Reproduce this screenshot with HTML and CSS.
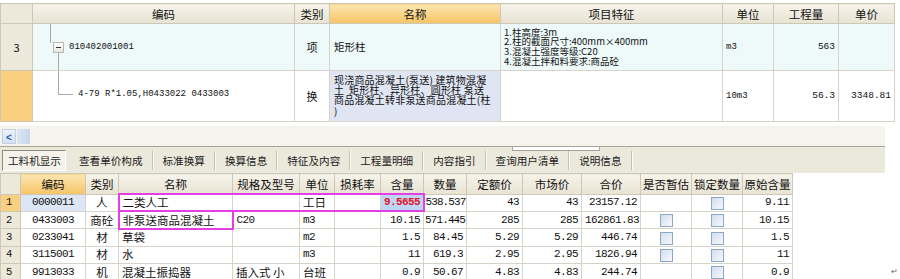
FILE: index.html
```html
<!DOCTYPE html>
<html lang="zh-CN">
<head>
  <meta charset="UTF-8">
  <title>清单组价</title>
  <link rel="stylesheet" href="styles.css">
</head>
<body>
  <div class="upper">
    <table class="grid top">
      <colgroup>
        <col style="width:32px"><col style="width:262px"><col style="width:35px"><col style="width:171px">
        <col style="width:222px"><col style="width:51px"><col style="width:65px"><col style="width:56px">
      </colgroup>
      <thead>
        <tr>
          <th class="rn"></th><th>编码</th><th>类别</th><th class="hot">名称</th>
          <th>项目特征</th><th>单位</th><th>工程量</th><th>单价</th>
        </tr>
      </thead>
      <tbody>
        <tr class="item">
          <td class="rn">3</td>
          <td class="code">
            <div class="node lvl1"><span class="tog"></span><span class="mono">010402001001</span></div>
          </td>
          <td class="c">项</td>
          <td class="name">矩形柱</td>
          <td class="feat">1.柱高度:3m<br>2.柱的截面尺寸:400mm×400mm<br>3.混凝土强度等级:C20<br>4.混凝土拌和料要求:商品砼</td>
          <td class="unit mono">m3</td>
          <td class="num">563</td>
          <td class="num"></td>
        </tr>
        <tr class="sub">
          <td class="rn cur"></td>
          <td class="code">
            <div class="node lvl2"><span class="elbow"></span><span class="mono">4-79 R*1.05,H0433022 0433003</span></div>
          </td>
          <td class="c">换</td>
          <td class="name long sel">现浇商品混凝土(泵送) 建筑物混凝<br>土&nbsp; 矩形柱、异形柱、圆形柱 泵送<br>商品混凝土转非泵送商品混凝土(柱<br>)</td>
          <td class="blank"></td>
          <td class="unit mono">10m3</td>
          <td class="num">56.3</td>
          <td class="num">3348.81</td>
        </tr>
      </tbody>
    </table>
    <div class="hscroll"><span class="arrow">&lt;</span><span class="thumb"></span></div>
  </div>

  <div class="tabs">
    <span class="tab on">工料机显示</span>
    <span class="tab">查看单价构成</span>
    <span class="tab">标准换算</span>
    <span class="tab">换算信息</span>
    <span class="tab">特征及内容</span>
    <span class="tab">工程量明细</span>
    <span class="tab">内容指引</span>
    <span class="tab">查询用户清单</span>
    <span class="tab">说明信息</span>
    <span class="grip"></span>
  </div>

  <table class="grid bottom">
    <colgroup>
      <col style="width:20px"><col style="width:65px"><col style="width:33px"><col style="width:114px">
      <col style="width:67px"><col style="width:35px"><col style="width:46px"><col style="width:43px">
      <col style="width:43px"><col style="width:56px"><col style="width:59px"><col style="width:59px">
      <col style="width:51px"><col style="width:51px"><col style="width:50px">
    </colgroup>
    <thead>
      <tr>
        <th class="rn"></th><th class="hot">编码</th><th>类别</th><th>名称</th><th>规格及型号</th>
        <th>单位</th><th>损耗率</th><th>含量</th><th>数量</th><th>定额价</th><th>市场价</th>
        <th>合价</th><th>是否暂估</th><th>锁定数量</th><th>原始含量</th>
      </tr>
    </thead>
    <tbody>
      <tr>
        <td class="rn cur">1</td><td class="c n sel">0000011</td><td class="c">人</td>
        <td class="mk-t mk-b mk-l">二类人工</td><td class="mk-t mk-b"></td><td class="mk-t mk-b">工日</td>
        <td class="mk-t mk-b"></td><td class="r n hl mk-t mk-b mk-r">9.5655</td>
        <td class="r n tight">538.537</td><td class="r n">43</td><td class="r n">43</td><td class="r n">23157.12</td>
        <td></td><td class="c"><span class="cb"></span></td><td class="r n">9.11</td>
      </tr>
      <tr>
        <td class="rn">2</td><td class="c n">0433003</td><td class="c">商砼</td>
        <td class="mk-t mk-b mk-l mk-r">非泵送商品混凝土</td><td class="n">C20</td><td class="n">m3</td>
        <td></td><td class="r n">10.15</td><td class="r n tight">571.445</td><td class="r n">285</td><td class="r n">285</td>
        <td class="r n">162861.83</td><td class="c"><span class="cb"></span></td><td class="c"><span class="cb"></span></td>
        <td class="r n">10.15</td>
      </tr>
      <tr>
        <td class="rn">3</td><td class="c n">0233041</td><td class="c">材</td>
        <td>草袋</td><td></td><td class="n">m2</td>
        <td></td><td class="r n">1.5</td><td class="r n">84.45</td><td class="r n">5.29</td><td class="r n">5.29</td>
        <td class="r n">446.74</td><td class="c"><span class="cb"></span></td><td class="c"><span class="cb"></span></td>
        <td class="r n">1.5</td>
      </tr>
      <tr>
        <td class="rn">4</td><td class="c n">3115001</td><td class="c">材</td>
        <td>水</td><td></td><td class="n">m3</td>
        <td></td><td class="r n">11</td><td class="r n">619.3</td><td class="r n">2.95</td><td class="r n">2.95</td>
        <td class="r n">1826.94</td><td class="c"><span class="cb"></span></td><td class="c"><span class="cb"></span></td>
        <td class="r n">11</td>
      </tr>
      <tr>
        <td class="rn">5</td><td class="c n">9913033</td><td class="c">机</td>
        <td>混凝土振捣器</td><td>插入式 小</td><td>台班</td>
        <td></td><td class="r n">0.9</td><td class="r n">50.67</td><td class="r n">4.83</td><td class="r n">4.83</td>
        <td class="r n">244.74</td><td></td><td class="c"><span class="cb"></span></td>
        <td class="r n">0.9</td>
      </tr>
    </tbody>
  </table>
  <span class="mark">↵</span>
</body>
</html>
```

FILE: styles.css
```css
body {
  margin: 0;
  background: #fff;
  font-family: "Noto Sans CJK SC", "Liberation Sans", sans-serif;
  font-size: 11px;
  color: #111;
  width: 900px;
  height: 279px;
  overflow: hidden;
  position: relative;
}

.mono {
  font-family: "Liberation Mono", "Noto Sans CJK SC", monospace;
  font-size: 9px;
}

/* shared grid look */
.grid {
  border-collapse: collapse;
  table-layout: fixed;
}

.grid th {
  height: 19px;
  padding: 0;
  font-weight: normal;
  font-size: 11.5px;
  background: linear-gradient(#f6f3ea, #e8e3d3);
  border: 1px solid #cdc8b6;
  text-align: center;
  white-space: nowrap;
}

.grid th.hot {
  background: linear-gradient(#fde6b2, #f5c466);
}

.grid td {
  padding: 0 3px;
  border: 1px solid #d6d3ca;
  white-space: nowrap;
  overflow: hidden;
}

.grid .rn {
  background: #ece8da;
  border-color: #cdc8b6;
}

.grid .rn.cur {
  background: #fbcf80;
}

.c { text-align: center; }
.r { text-align: right; }

/* upper grid */
.upper {
  padding-top: 3px;
}

.top {
  width: 895px;
}

.top td {
  height: 46px;
  line-height: 12px;
  background: #fff;
}

.top .item td {
  background: #eefafa;
}

.top .item td.rn {
  background: #ece8da;
  text-align: center;
}

.top td.sel {
  background: #dfe5f2;
}

.top td.c {
  font-size: 11px;
}

.top .name {
  padding-left: 4px;
  font-size: 10.5px;
}

.top .name.long {
  font-size: 10px;
  line-height: 10.2px;
  letter-spacing: 0.2px;
  vertical-align: top;
  padding-top: 4px;
}

.top .feat {
  font-size: 9.5px;
  line-height: 9.6px;
  padding-left: 3px;
}

.top .unit {
  padding-left: 3px;
}

.top .num {
  text-align: right;
  font-family: "Liberation Mono", monospace;
  font-size: 9.5px;
  padding-right: 3px;
}

.top td.code {
  padding: 0;
  position: relative;
  vertical-align: top;
}

.node {
  display: flex;
  align-items: center;
  height: 46px;
}

.lvl1 {
  padding-left: 20px;
}

.lvl2 {
  padding-left: 25px;
}

.tog {
  position: relative;
  width: 9px;
  height: 9px;
  margin-right: 5px;
  border: 1px solid #b9b7ab;
  background: linear-gradient(#fff, #e6e5de);
}

.tog::before {
  content: "";
  position: absolute;
  left: 2px;
  top: 4px;
  width: 5px;
  height: 1px;
  background: #333;
}

/* connector lines of the tree */
.tog::after {
  content: "";
  position: absolute;
  left: 4px;
  top: 10px;
  width: 1px;
  height: 17px;
  background: #a9a9a9;
}

.lvl1::before {
  content: "";
  position: absolute;
  left: 17px;
  top: 0;
  width: 1px;
  height: 19px;
  background: #a9a9a9;
}

.elbow {
  position: relative;
  width: 15px;
  height: 1px;
  margin-right: 5px;
  background: #a9a9a9;
}

.elbow::before {
  content: "";
  position: absolute;
  left: 0;
  bottom: 0;
  width: 1px;
  height: 24px;
  background: #a9a9a9;
}

.hscroll {
  display: flex;
  align-items: center;
  height: 20px;
  width: 885px;
  margin-top: 4px;
  padding-left: 2px;
  background: #f4f3ee;
  box-sizing: border-box;
}

.arrow {
  width: 14px;
  height: 15px;
  line-height: 15px;
  text-align: center;
  font-family: "Liberation Sans", sans-serif;
  font-size: 10px;
  font-weight: bold;
  color: #2c5fb4;
  background: linear-gradient(#eef3fb, #d6e1f1);
  border: 1px solid #c3d0e4;
  box-sizing: border-box;
}

.thumb {
  width: 13px;
  height: 15px;
  margin-left: 1px;
  background: linear-gradient(90deg, #dbe5f4, #c7d6ec);
}

/* tab strip */
.tabs {
  position: relative;
  display: flex;
  align-items: center;
  width: 885px;
  height: 27px;
  box-sizing: border-box;
  padding-left: 2px;
  background: #ebe8dc;
  border-top: 1px solid #a8a597;
}

.tab {
  padding: 0 9px 0 10px;
  height: 19px;
  line-height: 19px;
  font-size: 10.6px;
  color: #222;
  border-right: 1px solid #c4c0ae;
  box-shadow: 1px 0 0 #fbfaf5;
}

.tab.on {
  padding: 0 4px 0 5px;
  margin-right: 3px;
  background: #f4f2ea;
  border: 1px solid #8d8a7c;
  border-right-color: #fff;
  border-bottom-color: #fff;
  box-shadow: none;
}

.grip {
  position: absolute;
  left: 512px;
  top: 0;
  width: 86px;
  height: 3px;
  border: 1px solid #a3a3a3;
  border-top: none;
  background: #fff;
}

/* lower grid */
.bottom {
  width: 793px;
}

.bottom tbody tr {
  height: 17.4px;
}

.bottom td {
  padding-top: 0;
  padding-bottom: 0;
  font-size: 11.5px;
  line-height: 13px;
}

.bottom td.rn {
  padding-left: 5px;
  font-family: "Liberation Mono", monospace;
  font-size: 10.5px;
}

.bottom td.n {
  font-family: "Liberation Mono", "Noto Sans CJK SC", monospace;
  font-size: 11px;
  letter-spacing: -0.6px;
}

.bottom td.r {
  padding-right: 3px;
}

.bottom td.tight {
  padding: 0 1px;
  letter-spacing: -0.9px;
}

.bottom td.sel {
  background: #dce6f4;
}

.bottom td.hl {
  background: #bcd6f3;
  color: #e3122a;
  font-weight: bold;
}

.mk-t { border-top: 2px solid #e43fe4 !important; }
.mk-b { border-bottom: 2px solid #e43fe4 !important; }
.mk-l { border-left: 2px solid #e43fe4 !important; }
.mk-r { border-right: 2px solid #e43fe4 !important; }

.cb {
  display: inline-block;
  width: 11px;
  height: 11px;
  vertical-align: middle;
  border: 1px solid #8ba7c6;
  background: linear-gradient(135deg, #d3deee, #f6f8fc);
}

.mark {
  position: absolute;
  left: 891px;
  top: 265px;
  font-size: 8px;
  color: #666;
}
```
